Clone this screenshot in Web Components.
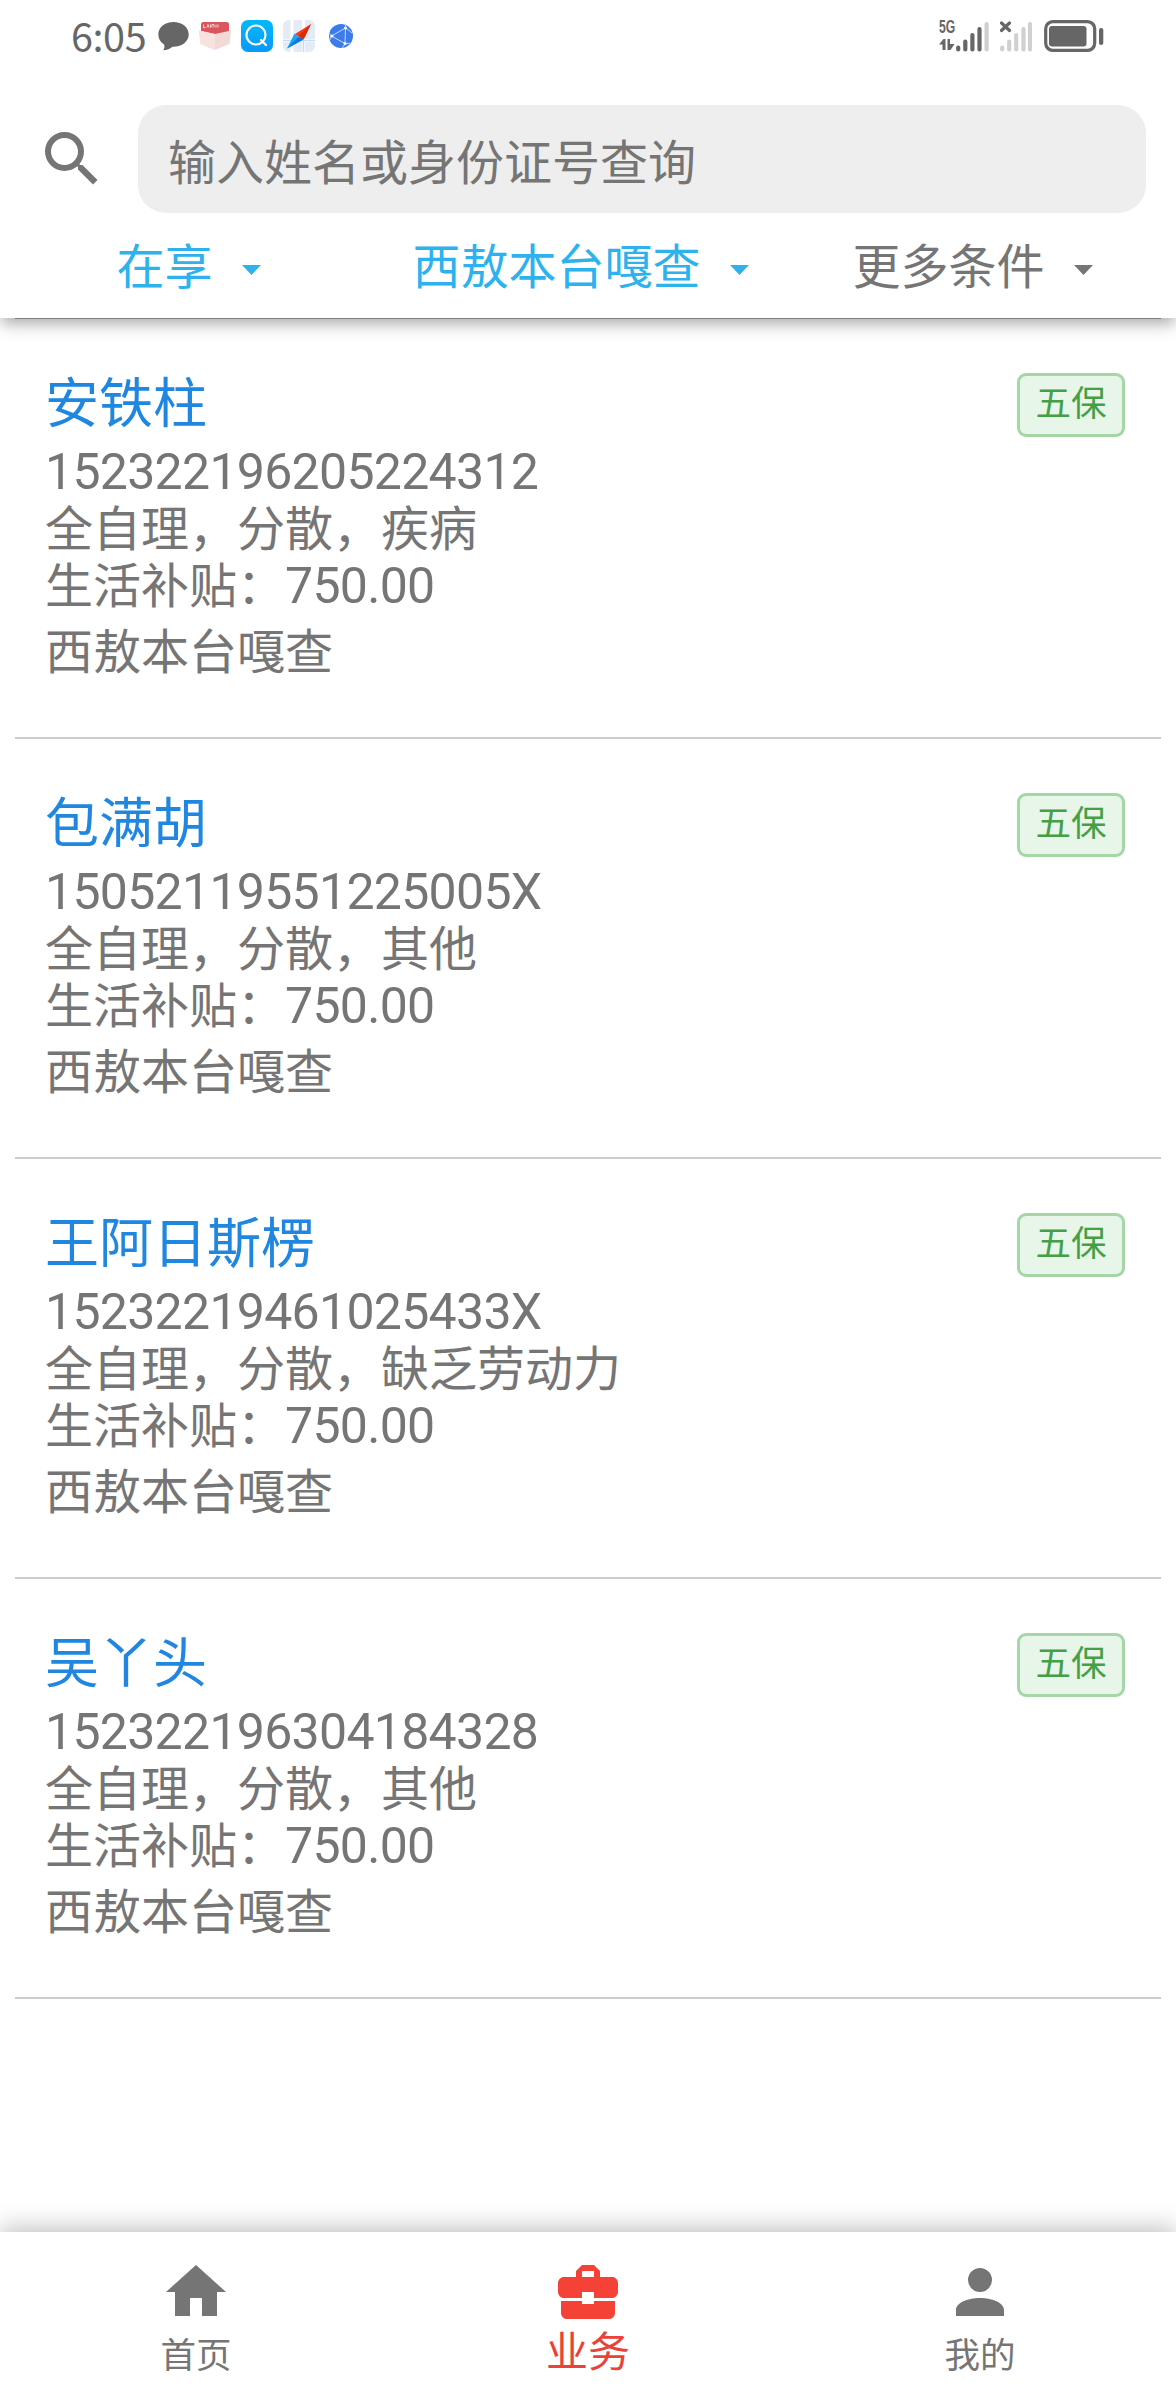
<!DOCTYPE html>
<html lang="zh-CN">
<head>
<meta charset="utf-8">
<title>业务</title>
<style>
  body {
    margin: 0;
    background: #fff;
    color: #757575;
    font-family: "Noto Sans CJK SC", sans-serif;
    font-size: 48px;
  }
</style>
</head>
<body>
<app-shell>
  <status-bar slot="top" time="6:05"></status-bar>
  <search-header slot="top" placeholder="输入姓名或身份证号查询">
    <filter-item active>在享</filter-item>
    <filter-item active>西敖本台嘎查</filter-item>
    <filter-item>更多条件</filter-item>
  </search-header>

  <person-card name="安铁柱" tag="五保">
    <span>152322196205224312</span>
    <span slot="info">全自理，分散，疾病</span>
    <span slot="money">750.00</span>
    <span slot="village">西敖本台嘎查</span>
  </person-card>
  <person-card name="包满胡" tag="五保">
    <span>15052119551225005X</span>
    <span slot="info">全自理，分散，其他</span>
    <span slot="money">750.00</span>
    <span slot="village">西敖本台嘎查</span>
  </person-card>
  <person-card name="王阿日斯楞" tag="五保">
    <span>15232219461025433X</span>
    <span slot="info">全自理，分散，缺乏劳动力</span>
    <span slot="money">750.00</span>
    <span slot="village">西敖本台嘎查</span>
  </person-card>
  <person-card name="吴丫头" tag="五保">
    <span>152322196304184328</span>
    <span slot="info">全自理，分散，其他</span>
    <span slot="money">750.00</span>
    <span slot="village">西敖本台嘎查</span>
  </person-card>

  <bottom-nav slot="bottom">
    <nav-item icon="home">首页</nav-item>
    <nav-item icon="briefcase" active>业务</nav-item>
    <nav-item icon="account">我的</nav-item>
  </bottom-nav>
</app-shell>

<script>
const ICONS = {
  home: 'M10,20V14H14V20H19V12H22L12,3L2,12H5V20H10Z',
  briefcase: 'M10,16V15H3V19C3,20.11 3.89,21 5,21H19C20.11,21 21,20.11 21,19V15H14V16H10M20,7H16V5L14,3H10L8,5V7H4C2.9,7 2,7.9 2,9V12C2,13.11 2.89,14 4,14H10V12H14V14H20C21.1,14 22,13.1 22,12V9C22,7.9 21.1,7 20,7M14,7H10V5H14V7Z',
  account: 'M12,4A4,4 0 0,1 16,8A4,4 0 0,1 12,12A4,4 0 0,1 8,8A4,4 0 0,1 12,4M12,14C16.42,14 20,15.79 20,18V20H4V18C4,15.79 7.58,14 12,14Z',
  magnify: 'M9.5,3A6.5,6.5 0 0,1 16,9.5C16,11.11 15.41,12.59 14.44,13.73L14.71,14H15.5L20.5,19L19,20.5L14,15.5V14.71L13.73,14.44C12.59,15.41 11.11,16 9.5,16A6.5,6.5 0 0,1 3,9.5A6.5,6.5 0 0,1 9.5,3M9.5,5C7,5 5,7 5,9.5C5,12 7,14 9.5,14C12,14 14,12 14,9.5C14,7 12,5 9.5,5Z'
};

class BaseElement extends HTMLElement {
  constructor() {
    super();
    this.attachShadow({ mode: 'open' });
  }

  connectedCallback() {
    this.shadowRoot.innerHTML = this.render();
  }
}

class AppShell extends BaseElement {
  render() {
    return `
      <style>
        :host {
          display: flex;
          flex-direction: column;
          width: 1176px;
          height: 2400px;
          overflow: hidden;
        }
        main {
          flex: 1;
          margin: 0 15px;
          border-top: 1px solid #aaa;
        }
      </style>
      <slot name="top"></slot>
      <main><slot></slot></main>
      <slot name="bottom"></slot>
    `;
  }
}

class MdIcon extends BaseElement {
  render() {
    return `
      <style>
        :host { display: block; width: 72px; height: 72px; }
        svg { display: block; }
      </style>
      <svg width="72" height="72" viewBox="0 0 24 24" fill="currentColor">
        <path d="${ICONS[this.getAttribute('name')]}" />
      </svg>
    `;
  }
}

class StatusBar extends BaseElement {
  render() {
    return `
      <style>
        :host {
          display: flex;
          align-items: flex-start;
          justify-content: space-between;
          box-sizing: border-box;
          height: 75px;
          padding: 16px 72px 0 71px;
          color: #666;
        }
        .left, .right { display: flex; align-items: center; height: 40px; }
        .time { width: 87px; font-size: 39.5px; line-height: 38px; margin-top: -2px; letter-spacing: -0.4px; white-space: nowrap; }
        .apps { display: flex; align-items: center; gap: 10px; }
        svg { display: block; }
        .signal { display: flex; gap: 11px; }
        .battery { margin-left: 12px; }
        .cell { display: flex; }
        .net { display: flex; flex-direction: column; gap: 5px; width: 17px; }
        .net b {
          font: bold 19px/14px "Liberation Sans", sans-serif;
          transform: scaleX(.64);
          transform-origin: 0 50%;
        }
      </style>
      <div class="left">
        <div class="time">${this.getAttribute('time')}</div>
        <div class="apps">
          <svg width="31" height="32" viewBox="0 0 31 32">
            <path fill="#666" d="M15.5 2C7 2 .3 7 .3 14.500C.3 19 2.500 22 6 24.500C7 26.500 6.500 28.500 5.200 30.200C9 30.200 12.500 28.500 14.500 26.700C24 27 30.700 21.500 30.700 14.500C30.700 7 24 2 15.500 2Z" />
          </svg>
          <svg width="32" height="32" viewBox="0 0 32 32">
            <rect x="2" y="2" width="28" height="17" rx="2.500" fill="#d9565e" />
            <path d="M4.500 4.500v3h2M8 7.500l1-3 1 3M11.500 4.500v3M13 7.500v-3h2v3M17 4.500v3M19 4.500v3" stroke="#f6d5d6" fill="none" />
            <path d="M0 10.500L16 14L32 10.500L30.500 24L16 30L1.500 24Z" fill="#f2d9d7" />
            <path d="M0 10.500L16 14V30L1.500 24Z" fill="#f6e3e0" />
          </svg>
          <svg width="32" height="32" viewBox="0 0 32 32">
            <defs><linearGradient id="g" x2="0" y2="1"><stop stop-color="#04b8fb" /><stop offset="1" stop-color="#079af8" /></linearGradient></defs>
            <rect width="32" height="32" rx="7" fill="url(#g)" />
            <g fill="none" stroke="#fff" stroke-width="2.200" stroke-linecap="round"><circle cx="15" cy="15" r="9.500" /><path d="M20 20l5 5" /></g>
          </svg>
          <svg width="32" height="32" viewBox="0 0 32 32">
            <rect width="32" height="32" rx="6" fill="#e4ebf5" />
            <path d="M9 0v32M0 20.500h32M20.500 0v32" stroke="#fff" stroke-width="3" />
            <path d="M0 20.500h32M20.500 20v12" stroke="#bfdcf5" stroke-width="1.500" />
            <path d="M28 4L12 14L20 20Z" fill="#f83c16" />
            <path d="M28 4L21 19L15.500 16Z" fill="#dd2a05" />
            <path d="M4 28.500L11.500 13.500L20 20Z" fill="#18a7f4" />
            <path d="M4 28.500L15.500 17L21 19Z" fill="#1672dc" />
          </svg>
          <svg width="32" height="32" viewBox="-4 -4 32 32">
            <circle cx="12" cy="12" r="12" fill="#3b7bea" />
            <g fill="none" stroke="#c5d9fb" stroke-width="1">
              <path d="M2.500 12L16.500 4L16 19.500ZM16.500 0V3.500L23 9M16 20l5-1M16 20l-3 4M0 9l2 3-1 4" />
            </g>
            <g fill="#fff"><circle cx="3" cy="12" r="1.500" /><circle cx="16.500" cy="4" r="1.500" /><circle cx="16" cy="19.500" r="1.500" /></g>
          </svg>
        </div>
      </div>
      <div class="right">
        <div class="signal">
          <div class="cell">
            <div class="net">
              <b>5G</b>
              <svg width="16" height="12" viewBox="0 0 16 12"><path d="M0 5.500L4.500 0H6.500V11H3.500V5.500ZM8.500 0H11V5H15.500L11.500 11H8.500Z" fill="#666" /></svg>
            </div>
            ${this.bars(4, '#666')}
          </div>
          <svg width="32" height="32" viewBox="0 0 32 32">
            <path d="M1.500 3L9.500 10.500M9.500 3L1.500 10.500" stroke="#666" stroke-width="3.200" stroke-linecap="round" />
            <g stroke="#d0d0d0" stroke-width="4.200" stroke-linecap="round"><path d="M2.200 27.500v2M9.200 21.500v8M16.200 15v14.500M23.500 9v20.500M30 4v25.500" /></g>
          </svg>
        </div>
        <svg class="battery" width="60" height="32" viewBox="0 0 60 32">
          <rect x="1.700" y="1.700" width="49" height="28.600" rx="7" fill="none" stroke="#666" stroke-width="3.200" />
          <rect x="5" y="6" width="37.500" height="20.500" rx="3" fill="#666" />
          <rect x="55" y="8" width="4.300" height="17" rx="2.100" fill="#666" />
        </svg>
      </div>
    `;
  }

  bars(on, color) {
    const tops = [27.5, 21.5, 15, 9, 4];
    return `<svg width="33" height="32" viewBox="0 0 33 32">
      ${tops.map((y, i) => `<path d="M${2.2 + i * 7.1} ${y}V29.5" stroke="${i < on ? color : '#d0d0d0'}" stroke-width="4.2" stroke-linecap="round" />`).join('')}
    </svg>`;
  }
}

class SearchHeader extends BaseElement {
  render() {
    return `
      <style>
        :host {
          display: block;
          position: relative;
          box-sizing: border-box;
          height: 243px;
          padding-top: 30px;
          background: #fff;
          box-shadow: 0 6px 12px -3px rgba(0,0,0,.2), 0 9px 15px 0 rgba(0,0,0,.12), 0 3px 24px 0 rgba(0,0,0,.08);
          clip-path: inset(0 0 -60px 0);
        }
        .search {
          display: flex;
          align-items: center;
          gap: 30px;
          padding: 0 30px 0 36px;
        }
        .field {
          flex: 1;
          height: 108px;
          padding-left: 30px;
          border-radius: 28px;
          background: #eee;
          line-height: 109px;
        }
        .filters {
          display: grid;
          grid-template-columns: repeat(3, 1fr);
          margin-top: 15px;
        }
      </style>
      <div class="search">
        <md-icon name="magnify"></md-icon>
        <div class="field">${this.getAttribute('placeholder')}</div>
      </div>
      <div class="filters"><slot></slot></div>
    `;
  }
}

class FilterItem extends BaseElement {
  render() {
    return `
      <style>
        :host {
          display: flex;
          justify-content: center;
          align-items: center;
          gap: 29px;
          height: 71px;
          padding-right: 15px;
          white-space: nowrap;
        }
        :host([active]) { color: #2db2ee; }
        .text { line-height: 71px; }
        svg { margin-top: 13px; }
      </style>
      <span class="text"><slot></slot></span>
      <svg width="19" height="10" viewBox="0 0 19 10" fill="currentColor"><path d="M0 0H19L9.500 10Z" /></svg>
    `;
  }
}

class PersonCard extends BaseElement {
  render() {
    return `
      <style>
        :host {
          display: flex;
          justify-content: space-between;
          align-items: flex-start;
          box-sizing: border-box;
          height: 420px;
          padding: 55px 36px 0 30px;
          border-bottom: 2px solid #ccc;
          font-family: Roboto, "Noto Sans CJK SC", sans-serif;
          line-height: 57px;
        }
        .name { margin-bottom: 8px; color: #2087e0; font-size: 54px; line-height: 62px; }
        .number { font-size: 50px; letter-spacing: -.7px; }
        .money { line-height: 1; }
        .village { margin-top: 9px; }
        .tag {
          box-sizing: border-box;
          width: 108px;
          height: 64px;
          margin-top: -1px;
          border: 3px solid #a5d6a7;
          border-radius: 9px;
          background: #e8f5e9;
          color: #43a047;
          font-family: "Noto Sans CJK SC", sans-serif;
          font-size: 35.5px;
          line-height: 50px;
          text-align: center;
        }
      </style>
      <div>
        <div class="name">${this.getAttribute('name')}</div>
        <div class="number"><slot></slot></div>
        <div><slot name="info"></slot></div>
        <div>生活补贴：<span class="number money"><slot name="money"></slot></span></div>
        <div class="village"><slot name="village"></slot></div>
      </div>
      <div class="tag">${this.getAttribute('tag')}</div>
    `;
  }
}

class BottomNav extends BaseElement {
  render() {
    return `
      <style>
        :host {
          display: grid;
          grid-template-columns: repeat(3, 1fr);
          height: 168px;
          background: #fff;
          box-shadow: 0 -3px 24px rgba(0,0,0,.27);
        }
      </style>
      <slot></slot>
    `;
  }
}

class NavItem extends BaseElement {
  render() {
    return `
      <style>
        :host {
          display: flex;
          flex-direction: column;
          align-items: center;
          padding-top: 24px;
        }
        .label { font-size: 35.5px; line-height: 50px; }
        :host([active]) { color: #f44336; }
        :host([active]) .label { color: #ea4238; font-size: 42px; line-height: 42px; }
      </style>
      <md-icon name="${this.getAttribute('icon')}"></md-icon>
      <div class="label"><slot></slot></div>
    `;
  }
}

customElements.define('app-shell', AppShell);
customElements.define('md-icon', MdIcon);
customElements.define('status-bar', StatusBar);
customElements.define('search-header', SearchHeader);
customElements.define('filter-item', FilterItem);
customElements.define('person-card', PersonCard);
customElements.define('bottom-nav', BottomNav);
customElements.define('nav-item', NavItem);
</script>
</body>
</html>
